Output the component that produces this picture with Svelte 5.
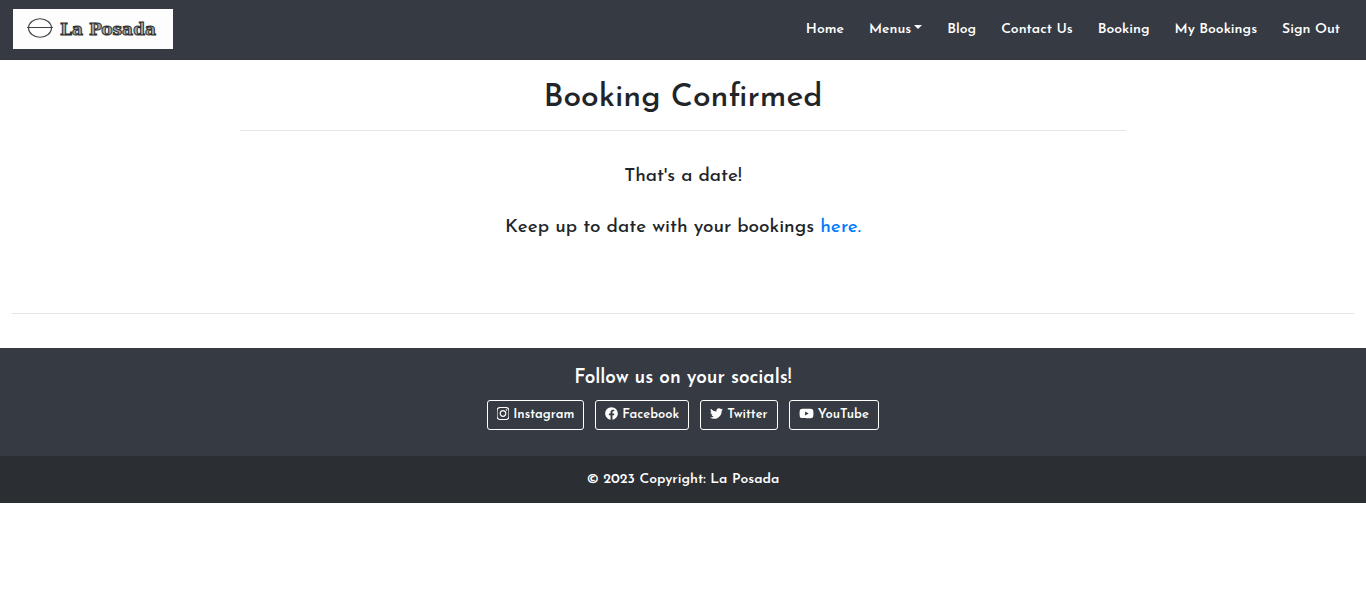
<script>
  const before = ['Home'];
  const after = ['Blog', 'Contact Us', 'Booking', 'My Bookings', 'Sign Out'];
  const socials = [
    { name: 'Instagram', box: '21 53 406 406', width: 12, path: 'M224.1 141c-63.6 0-114.9 51.3-114.9 114.9s51.3 114.9 114.9 114.9S339 319.5 339 255.9 287.7 141 224.1 141zm0 189.6c-41.1 0-74.7-33.5-74.7-74.7s33.5-74.7 74.7-74.7 74.7 33.5 74.7 74.7-33.6 74.7-74.7 74.7zm146.4-194.3c0 14.9-12 26.8-26.8 26.8-14.9 0-26.8-12-26.8-26.8s12-26.8 26.8-26.8 26.8 12 26.8 26.8zm76.1 27.2c-1.7-35.9-9.9-67.7-36.2-93.9-26.2-26.2-58-34.4-93.9-36.2-37-2.1-147.9-2.1-184.9 0-35.8 1.7-67.6 9.9-93.9 36.1s-34.4 58-36.2 93.9c-2.1 37-2.1 147.9 0 184.9 1.7 35.9 9.9 67.7 36.2 93.9s58 34.4 93.9 36.2c37 2.1 147.9 2.1 184.9 0 35.9-1.7 67.7-9.9 93.9-36.2 26.2-26.2 34.4-58 36.2-93.9 2.1-37 2.1-147.8 0-184.8zM398.8 388c-7.8 19.6-22.9 34.7-42.6 42.6-29.5 11.7-99.5 9-132.1 9s-102.7 2.6-132.1-9c-19.6-7.8-34.7-22.9-42.6-42.6-11.7-29.5-9-99.5-9-132.1s-2.6-102.7 9-132.1c7.8-19.6 22.9-34.7 42.6-42.6 29.5-11.7 99.5-9 132.1-9s102.7-2.6 132.1 9c19.6 7.8 34.7 22.9 42.6 42.6 11.7 29.5 9 99.5 9 132.1s2.7 102.7-9 132.1z' },
    { name: 'Facebook', box: '0 0 512 512', width: 13, path: 'M504 256C504 119 393 8 256 8S8 119 8 256c0 123.78 90.69 226.38 209.25 245V327.69h-63V256h63v-54.64c0-62.15 37-96.48 93.67-96.48 27.14 0 55.52 4.84 55.52 4.84v61h-31.28c-30.8 0-40.41 19.12-40.41 38.73V256h68.78l-11 71.69h-57.78V501C413.31 482.38 504 379.78 504 256z' },
    { name: 'Twitter', box: '0 0 512 512', width: 13, path: 'M459.37 151.716c.325 4.548.325 9.097.325 13.645 0 138.72-105.583 298.558-298.558 298.558-59.452 0-114.68-17.219-161.137-47.106 8.447.974 16.568 1.299 25.34 1.299 49.055 0 94.213-16.568 130.274-44.832-46.132-.975-84.792-31.188-98.112-72.772 6.498.974 12.995 1.624 19.818 1.624 9.421 0 18.843-1.3 27.614-3.573-48.081-9.747-84.143-51.98-84.143-102.985v-1.299c13.969 7.797 30.214 12.67 47.431 13.319-28.264-18.843-46.781-51.005-46.781-87.391 0-19.492 5.197-37.36 14.294-52.954 51.655 63.675 129.3 105.258 216.365 109.807-1.624-7.797-2.599-15.918-2.599-24.04 0-57.828 46.782-104.934 104.934-104.934 30.213 0 57.502 12.67 76.67 33.137 23.715-4.548 46.456-13.32 66.599-25.34-7.798 24.366-24.366 44.833-46.132 57.827 21.117-2.273 41.584-8.122 60.426-16.243-14.292 20.791-32.161 39.308-52.628 54.253z' },
    { name: 'YouTube', box: '0 0 576 512', width: 15, path: 'M549.655 124.083c-6.281-23.65-24.787-42.276-48.284-48.597C458.781 64 288 64 288 64S117.22 64 74.629 75.486c-23.497 6.322-42.003 24.947-48.284 48.597-11.412 42.867-11.412 132.305-11.412 132.305s0 89.438 11.412 132.305c6.281 23.65 24.787 41.5 48.284 47.821C117.22 448 288 448 288 448s170.78 0 213.371-11.486c23.497-6.321 42.003-24.171 48.284-47.821 11.412-42.867 11.412-132.305 11.412-132.305s0-89.438-11.412-132.305zm-317.51 213.508V175.185l142.739 81.205-142.739 81.201z' }
  ];
</script>

<header>
  <a class="brand" href="#home">
    <svg width="28" height="22" viewBox="0 0 28 22" fill="none" stroke="#444" aria-hidden="true">
      <ellipse cx="14" cy="10" rx="11.5" ry="9.2" stroke-width="1.1" />
      <path d="M1 9.5h26" stroke-width="1" />
    </svg>
    <span>La Posada</span>
  </a>
  <nav>
    {#each before as item}<a href="#top">{item}</a>{/each}
    <button type="button" aria-haspopup="true">Menus<i></i></button>
    {#each after as item}<a href="#top">{item}</a>{/each}
  </nav>
</header>

<main>
  <section>
    <h1>Booking Confirmed</h1>
    <hr />
    <p>That's a date!</p>
    <p>Keep up to date with your bookings <a href="#bookings">here.</a></p>
  </section>
  <hr />
</main>

<footer>
  <div class="social">
    <h2>Follow us on your socials!</h2>
    <div class="links">
      {#each socials as s}
        <a href="#social">
          <svg width={s.width} height="13" viewBox={s.box} fill="currentColor" aria-hidden="true"><path d={s.path} /></svg>
          {s.name}
        </a>
      {/each}
    </div>
  </div>
  <div class="copyright">© 2023 Copyright: La Posada</div>
</footer>

<style>
  :global(body) {
    margin: 0;
    background: #fff;
    color: #212529;
    font-family: "Josefin Sans", Lato, sans-serif;
  }
  a {
    color: #007bff;
    text-decoration: none;
  }
  header {
    display: flex;
    align-items: center;
    justify-content: space-between;
    padding: 9px 26px 10px 13px;
    border-bottom: 1px solid #33363d;
    background: #363a42;
  }
  .brand {
    display: flex;
    align-items: center;
    gap: 6px;
    box-sizing: border-box;
    width: 160px;
    height: 40px;
    padding: 0 13px;
    background: #fdfdfd;
    white-space: nowrap;
  }
  .brand svg {
    flex: none;
  }
  .brand span {
    color: #aaa;
    font: bold 17px/22px "DejaVu Serif", serif;
    -webkit-text-stroke: 1px #2c2c2c;
  }
  nav {
    display: flex;
    gap: 25px;
  }
  nav a,
  nav button {
    padding: 2px 0 0;
    border: 0;
    background: none;
    color: #fff;
    font: 600 14px/20px "Josefin Sans", Lato, sans-serif;
    white-space: nowrap;
  }
  nav i {
    display: inline-block;
    margin-left: 3px;
    border: 4px solid transparent;
    border-top-color: #fff;
    border-bottom: 0;
    vertical-align: 4px;
  }
  main {
    padding: 18px 12px 34px;
    text-align: center;
  }
  section {
    width: 66%;
    margin: 0 auto;
    padding-bottom: 71px;
  }
  h1 {
    margin: 0;
    font-size: 32px;
    font-weight: 500;
    line-height: 40px;
  }
  hr {
    margin: 0;
    border: 0;
    border-top: 1px solid #e5e5e5;
  }
  section hr {
    margin: 12px 0 32px;
  }
  p {
    margin: 0;
    font-size: 19px;
    font-weight: 500;
    line-height: 28px;
  }
  p + p {
    margin-top: 23px;
  }
  footer {
    background: #363a42;
    color: #fff;
    text-align: center;
  }
  .social {
    padding: 18px 12px 26px;
  }
  h2 {
    margin: 0 0 8px;
    font-size: 19px;
    font-weight: 600;
    line-height: 26px;
  }
  .links {
    display: flex;
    flex-wrap: wrap;
    justify-content: center;
    gap: 11px;
  }
  .links a {
    display: flex;
    align-items: center;
    gap: 4px;
    padding: 0 9px;
    border: 1px solid #fff;
    border-radius: 3px;
    color: #fff;
    font-size: 13px;
    font-weight: 600;
    line-height: 28px;
  }
  .links svg {
    margin-bottom: 3px;
  }
  .copyright {
    padding: 12px;
    background: #2b2e33;
    font-size: 14px;
    font-weight: 600;
    line-height: 23px;
  }
</style>
